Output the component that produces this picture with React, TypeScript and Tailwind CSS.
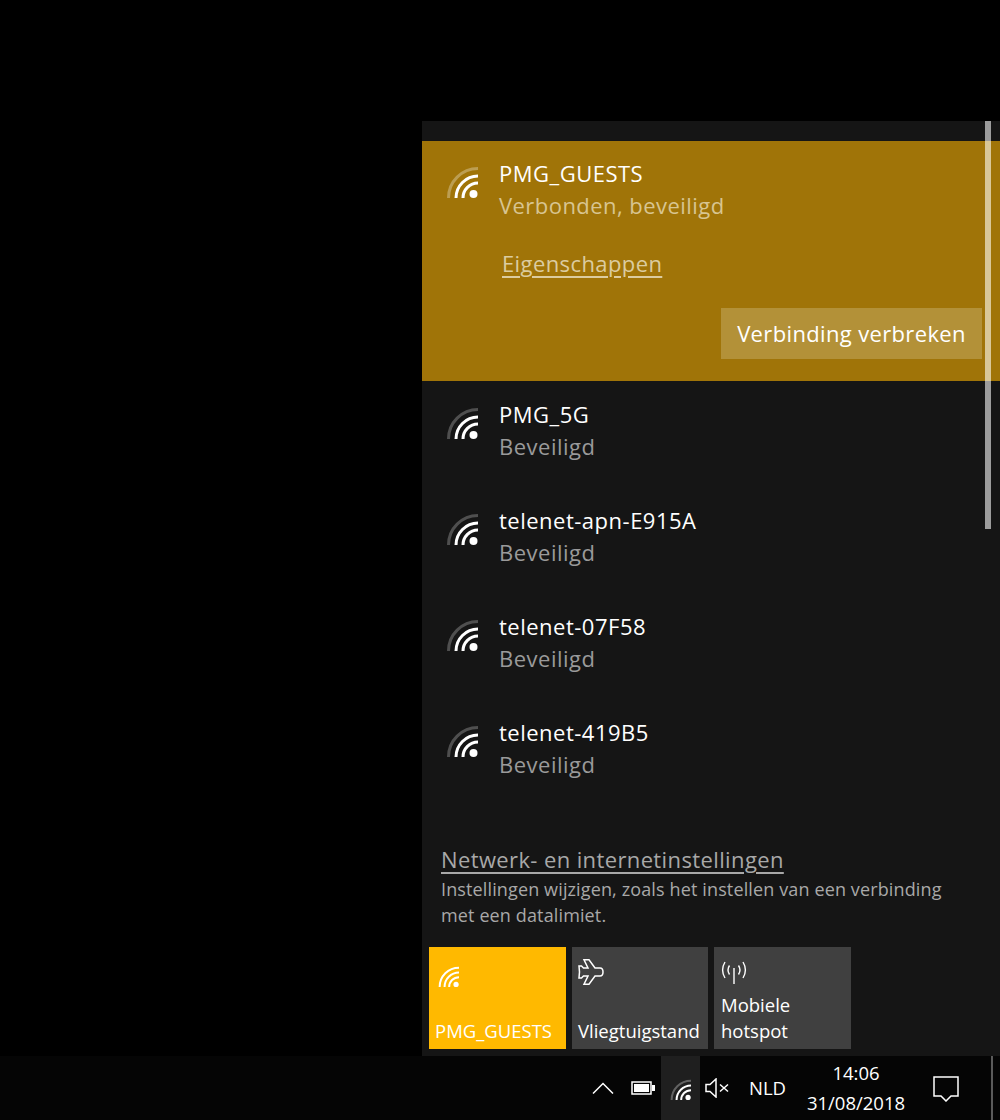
import React from 'react';

const font = { fontFamily: '"Open Sans", "Noto Sans", sans-serif' };

const WifiIcon: React.FC<{ className?: string; outerClass?: string }> = ({ className, outerClass }) => (
  <svg viewBox="0 0 32 32" className={className} fill="none" stroke="currentColor" strokeWidth="3">
    <path d="M2.5 32A29.5 29.5 0 0 1 32 2.5" className={outerClass} />
    <path d="M10 32A22 22 0 0 1 32 10" />
    <path d="M17 32A15 15 0 0 1 32 17" />
    <circle cx="27.5" cy="28" r="4" fill="currentColor" stroke="none" />
  </svg>
);

const networks = ['PMG_5G', 'telenet-apn-E915A', 'telenet-07F58', 'telenet-419B5'];

const Tile: React.FC<{ label: string; bg: string; icon: React.ReactNode; pad: string }> = ({ label, bg, icon, pad }) => (
  <div className={`w-[136.5px] h-[102px] flex flex-col justify-between text-white text-[18.5px] leading-[26px] ${bg} ${pad}`}>
    <div className="h-[30px]">{icon}</div>
    <div className="pb-[5px]">{label}</div>
  </div>
);

export default function App() {
  return (
    <div className="w-[1000px] h-[1120px] bg-black flex flex-col overflow-hidden" style={font}>
      <div className="h-[121px] shrink-0" />
      <div className="relative ml-[422px] w-[578px] h-[935px] shrink-0 bg-[#151515] flex flex-col">
        {/* scrollbar */}
        <div className="absolute left-[563px] top-0 w-[6px] h-[20px] bg-[#9c9c9c]" />
        <div className="absolute left-[563px] top-[20px] w-[6px] h-[240px] bg-[#d9c798]" />
        <div className="absolute left-[563px] top-[260px] w-[6px] h-[148px] bg-[#9c9c9c]" />

        <div className="h-[20px] shrink-0" />

        {/* connected network */}
        <div className="h-[240px] shrink-0 bg-[#a07408] pl-[24px] flex flex-col">
          <div className="flex pt-[16px]">
            <WifiIcon className="w-[32px] h-[32px] mt-[9px] text-white" outerClass="opacity-30" />
            <div className="ml-[21px]">
              <div className="text-[22px] tracking-[0.5px] leading-[32px] text-white">PMG_GUESTS</div>
              <div className="text-[22px] tracking-[0.45px] leading-[32px] text-[#d8c591]">Verbonden, beveiligd</div>
            </div>
          </div>
          <div className="ml-[56px] mt-[26px] text-[22px] tracking-[0.4px] leading-[32px] text-[#dccca0] underline underline-offset-4">
            Eigenschappen
          </div>
          <div className="flex justify-end pr-[18px] mt-auto pb-[22px]">
            <div className="w-[261px] h-[51px] bg-[#b39138] text-white text-[22px] tracking-[0.35px] flex items-center justify-center">
              Verbinding verbreken
            </div>
          </div>
        </div>

        {/* other networks */}
        <div className="pt-[17px] flex flex-col">
          {networks.map((name) => (
            <div key={name} className="h-[106px] flex pl-[24px]">
              <WifiIcon className="w-[32px] h-[32px] mt-[9px] text-white" outerClass="opacity-25" />
              <div className="ml-[21px]">
                <div className="text-[22px] tracking-[0.5px] leading-[32px] text-white">{name}</div>
                <div className="text-[22px] tracking-[0.5px] leading-[32px] text-[#9a9a9a]">Beveiligd</div>
              </div>
            </div>
          ))}
        </div>

        {/* settings */}
        <div className="pl-[19px] mt-[22px]">
          <div className="text-[22px] tracking-[0.38px] leading-[30px] text-[#a8a8a8] underline underline-offset-4">
            Netwerk- en internetinstellingen
          </div>
          <div className="text-[18px] tracking-[0.13px] leading-[26px] text-[#a8a8a8] mt-[2px]">
            Instellingen wijzigen, zoals het instellen van een verbinding
            <br />
            met een datalimiet.
          </div>
        </div>

        {/* quick actions */}
        <div className="flex gap-[6px] pl-[7px] mt-auto mb-[7px]">
          <Tile
            label="PMG_GUESTS"
            bg="bg-[#ffb900]"
            pad="pl-[6px]"
            icon={<WifiIcon className="w-[21px] h-[21px] ml-[3px] mt-[19px] text-white" outerClass="opacity-100" />}
          />
          <Tile
            label="Vliegtuigstand"
            bg="bg-[#404040]"
            pad="pl-[6.5px]"
            icon={
              <svg viewBox="0 0 26 26" className="w-[26px] h-[26px] mt-[12px]" fill="none" stroke="white" strokeWidth="1.5">
                <path d="M6 .8h5L17 9h5c2 0 3 2 3 4s-1 4-3 4h-5l-6 8.200H6L10 17H5.500l-2 2H1l.5-6L1 7h2.500l2 2H10z" />
              </svg>
            }
          />
          <Tile
            label="Mobiele hotspot"
            bg="bg-[#404040]"
            pad="pl-[7px] pr-[40px]"
            icon={
              <svg viewBox="0 0 26 26" className="w-[26px] h-[26px] mt-[13px]" fill="none" stroke="white" strokeWidth="1.400">
                <path d="M13 8v16" />
                <path d="M8.500 5.500C6.500 8.500 6.500 11.500 8.500 14.500" />
                <path d="M17.500 5.500c2 3 2 6 0 9" />
                <path d="M4 2C1 7 1 13 4 18" />
                <path d="M22 2c3 5 3 11 0 16" />
              </svg>
            }
          />
        </div>
      </div>

      {/* taskbar */}
      <div className="h-[64px] shrink-0 bg-[#050505] flex items-center text-white">
        <div className="w-[590px]" />
        <svg viewBox="0 0 22 12" className="w-[22px] h-[12px] ml-[2px]" fill="none" stroke="white" strokeWidth="1.500">
          <path d="M1 11.500 11 1.500l10 10" />
        </svg>
        <svg viewBox="0 0 24 14" className="w-[24px] h-[14px] ml-[17px]" fill="none">
          <rect x="1" y="1" width="19" height="12" stroke="white" strokeWidth="1.500" />
          <rect x="3" y="3" width="15" height="8" fill="white" />
          <rect x="21" y="4" width="3" height="6" fill="white" />
        </svg>
        <div className="w-[39px] h-[64px] ml-[6px] bg-[#1f1f1f] flex items-center justify-center">
          <WifiIcon className="w-[21px] h-[21px] mt-[3px] text-white" outerClass="opacity-30" />
        </div>
        <svg viewBox="0 0 24 20" className="w-[24px] h-[20px] ml-[5px]" fill="none" stroke="white" strokeWidth="1.500">
          <path d="M1 6.500h4L11 1v18l-6-5.500H1z" />
          <path d="m15 6.500 8 7M23 6.500l-8 7" />
        </svg>
        <div className="w-[37px] ml-[20px] text-[18.500px]">NLD</div>
        <div className="w-[100px] ml-[20px] text-[18.500px] leading-[30px] text-center">
          <div>14:06</div>
          <div>31/08/2018</div>
        </div>
        <svg viewBox="0 0 26 26" className="w-[26px] h-[26px] ml-[27px] mt-[2px]" fill="none" stroke="white" strokeWidth="1.500">
          <path d="M1 1h24v19h-7l-5 5-5-5H1z" />
        </svg>
        <div className="w-[2px] h-[64px] ml-[32px] bg-[#5a5a5a]" />
      </div>
    </div>
  );
}
